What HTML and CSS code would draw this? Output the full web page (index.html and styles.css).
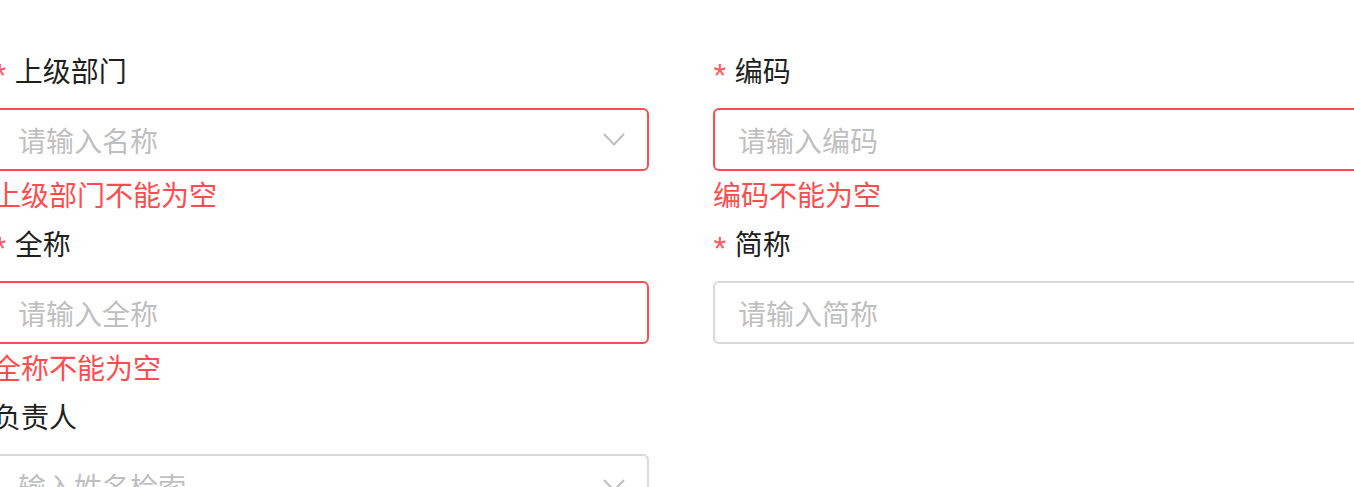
FILE: index.html
```html
<!DOCTYPE html>
<html lang="zh-CN">
<head>
<meta charset="utf-8">
<title>部门表单</title>
<link rel="stylesheet" href="styles.css">
</head>
<body>
<form class="form">
  <div class="item">
    <div class="label"><span class="req">*</span>上级部门</div>
    <div class="field field-error">
      <span class="placeholder">请输入名称</span>
      <svg class="chevron" width="22" height="13" viewBox="0 0 22 13"><path d="M1 1 L11 11.5 L21 1" fill="none" stroke="#bfbfbf" stroke-width="2"/></svg>
    </div>
    <div class="msg">上级部门不能为空</div>
  </div>
  <div class="item">
    <div class="label"><span class="req">*</span>编码</div>
    <div class="field field-error">
      <span class="placeholder">请输入编码</span>
    </div>
    <div class="msg">编码不能为空</div>
  </div>
  <div class="item">
    <div class="label"><span class="req">*</span>全称</div>
    <div class="field field-error">
      <span class="placeholder">请输入全称</span>
    </div>
    <div class="msg">全称不能为空</div>
  </div>
  <div class="item">
    <div class="label"><span class="req">*</span>简称</div>
    <div class="field">
      <span class="placeholder">请输入简称</span>
    </div>
    <div class="msg"></div>
  </div>
  <div class="item">
    <div class="label">负责人</div>
    <div class="field">
      <span class="placeholder">输入姓名检索</span>
      <svg class="chevron" width="22" height="13" viewBox="0 0 22 13"><path d="M1 1 L11 11.5 L21 1" fill="none" stroke="#bfbfbf" stroke-width="2"/></svg>
    </div>
    <div class="msg"></div>
  </div>
</form>
</body>
</html>
```

FILE: styles.css
```css
html, body {
  margin: 0;
  padding: 0;
  background: #ffffff;
  overflow: hidden;
}

body {
  font-family: "Noto Sans CJK SC", "Noto Sans", sans-serif;
  font-size: 28px;
  color: #1f1f1f;
  padding-top: 49px;
}

.form {
  display: grid;
  grid-template-columns: 656px 656px;
  column-gap: 64px;
  margin-left: -7px;
}

.item {
  display: flex;
  flex-direction: column;
}

.label {
  line-height: 42px;
  height: 42px;
  margin-bottom: 17px;
  white-space: nowrap;
}

.req {
  color: #ff5a5f;
  font-family: "Liberation Mono", monospace;
  font-size: 33px;
  line-height: 0;
  margin-left: -3px;
  margin-right: 5px;
  vertical-align: -6px;
}

.field {
  box-sizing: border-box;
  height: 63px;
  border: 2px solid #d9d9d9;
  border-radius: 6px;
  display: flex;
  align-items: center;
  justify-content: space-between;
  padding: 0 22px 0 23px;
}

.field-error {
  border-color: #ff4d4f;
}

.placeholder {
  color: #bfbfbf;
  white-space: nowrap;
}

.chevron {
  display: block;
  flex: none;
}

.msg {
  height: 51px;
  box-sizing: border-box;
  padding-top: 4px;
  line-height: 38px;
  color: #ff4d4f;
  white-space: nowrap;
}
```
